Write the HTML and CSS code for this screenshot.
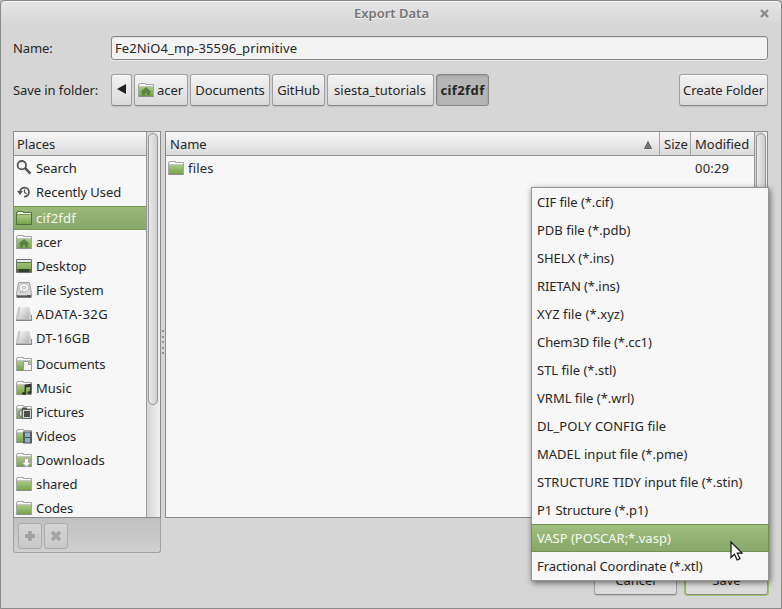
FILE: index.html
```
<!DOCTYPE html>
<html lang="en">
<head>
<meta charset="utf-8">
<title>Export Data</title>
<link rel="stylesheet" href="styles.css">
</head>
<body>
<svg class="defs" width="0" height="0" aria-hidden="true">
  <defs>
    <linearGradient id="green" x1="0" y1="0" x2="0" y2="1"><stop offset="0" stop-color="#a9ca86"/><stop offset="1" stop-color="#76a448"/></linearGradient>
    <linearGradient id="metal" x1="0" y1="0" x2="1" y2="1"><stop offset="0" stop-color="#fafafa"/><stop offset="1" stop-color="#b4b4b4"/></linearGradient>
    <symbol id="folder" viewBox="0 0 16 16">
      <path d="M.5 14.500V2.500h1v-1h6v1h8v12z" fill="#fafafa" stroke="#a5a5a5"/>
      <path d="M1 4.500h14" stroke="#c4c4c4"/>
      <path d="M1 5h14v9H1z" fill="url(#green)"/>
      <path d="M.5 14.500h15" stroke="#8d8d8d"/>
    </symbol>
    <symbol id="home" viewBox="0 0 16 16">
      <use href="#folder"/>
      <path d="M8 5l5.500 5H12v3.500H9V11H7v2.500H4V10H2.500z" fill="#5b8444"/>
    </symbol>
    <symbol id="drive" viewBox="0 0 16 16">
      <path d="M3 1h10l3 11v3H0v-3z" fill="#cfcfcf"/>
      <path d="M4.500 1h7.500l1 11.500H3z" fill="url(#metal)"/>
      <path d="M3 1L.5 12v3" fill="none" stroke="#c2c2c2"/>
      <path d="M0 13h16v1H0z" fill="#b5b5b5"/>
      <path d="M0 14.500h16" stroke="#858585"/>
      <path d="M15.500 9v6" stroke="#909090"/>
    </symbol>
  </defs>
</svg>

<main class="window">
  <header class="titlebar">
    <h1>Export Data</h1>
    <svg class="close" viewBox="0 0 9 9"><path d="M1 1l7 7M8 1L1 8" stroke="#8b8b8b" stroke-width="2.400"/></svg>
  </header>

  <div class="name-row">
    <label class="snug">Name:</label>
    <div class="entry"><span>Fe2NiO4_mp-35596_primitive</span></div>
  </div>

  <div class="path-row">
    <label class="snug">Save in folder:</label>
    <nav class="path">
      <button class="btn back"><svg viewBox="0 0 9 10"><path d="M0 5L9 0v10z" fill="#222"/></svg></button>
      <button class="btn acer"><svg class="icon"><use href="#home"/></svg><span class="snug">acer</span></button>
      <button class="btn docs"><span class="snug">Documents</span></button>
      <button class="btn git"><span class="snug">GitHub</span></button>
      <button class="btn siesta"><span>siesta_tutorials</span></button>
      <button class="btn current"><span>cif2fdf</span></button>
    </nav>
    <button class="btn create"><span class="snug">Create Folder</span></button>
  </div>

  <div class="panes">
    <aside class="sidebar">
      <div class="places">
        <div class="list">
          <div class="head"><span>Places</span></div>
          <ul>
            <li><svg class="icon" viewBox="0 0 16 16"><circle cx="5.800" cy="5.200" r="4.200" fill="none" stroke="#555" stroke-width="1.800"/><path d="M9 8.200l5.500 5.500" stroke="#555" stroke-width="2.400"/></svg><span class="snug">Search</span></li>
            <li><svg class="icon" viewBox="0 0 16 16"><path d="M4 8a4.500 4.500 0 1 1 4 4.500" fill="none" stroke="#555" stroke-width="1.700"/><path d="M1 7h6l-3 4z" fill="#555"/><path d="M8.500 5.500V8.500l2.200 1" fill="none" stroke="#555" stroke-width="1.200"/></svg><span class="snug">Recently Used</span></li>
            <li class="selected gap"><svg class="icon" viewBox="0 0 16 16"><path d="M.5 14.500V2.500h1v-1h6v1h8v12z" fill="#f1f6ea" stroke="#506f38"/><path d="M1 5h14v9H1z" fill="url(#green)"/><path d="M1 4.500h14" stroke="#76964f"/></svg><span class="wide">cif2fdf</span></li>
            <li><svg class="icon"><use href="#home"/></svg><span class="snug">acer</span></li>
            <li><svg class="icon" viewBox="0 0 16 16"><path d="M.5 1.500h15v13H.5z" fill="url(#green)" stroke="#707070"/><path d="M1 2h14v2.500H1z" fill="#eee"/><path d="M1 4.500h14" stroke="#567734"/><path d="M3 11h10v3H3z" fill="#30432a"/><path d="M1 12.500h2M13 12.500h2" stroke="#55673d" stroke-width="3"/></svg><span>Desktop</span></li>
            <li><svg class="icon" viewBox="0 0 16 16"><path d="M2.500.5h11l2 11v4H.5v-4z" fill="#dadada" stroke="#a2a2a2"/><ellipse cx="8" cy="5.800" rx="5" ry="4.300" fill="#f2f2f2" stroke="#b3b3b3"/><ellipse cx="8" cy="5.500" rx="1.700" ry="1.300" fill="#ddd" stroke="#aaa" stroke-width=".7"/><path d="M4 11l3-3" stroke="#aaa"/><path d="M1 13h14v2.500H1z" fill="#555"/><path d="M2 13.500h9" stroke="#888"/></svg><span class="snug">File System</span></li>
            <li><svg class="icon"><use href="#drive"/></svg><span class="drive-name">ADATA-32G</span></li>
            <li><svg class="icon"><use href="#drive"/></svg><span class="wide">DT-16GB</span></li>
            <li class="gap"><svg class="icon" viewBox="0 0 16 16"><use href="#folder"/><path d="M7.500 5.500h5l3 3v6h-8z" fill="#f5f5f5" stroke="#999"/><path d="M12.500 5.500v3h3" fill="#ddd" stroke="#999"/></svg><span class="snug">Documents</span></li>
            <li><svg class="icon" viewBox="0 0 16 16"><use href="#folder"/><path d="M9.300 13V5.500l5.500-1V12M9 7l5.500-1" fill="none" stroke="#353535" stroke-width="1.500"/><ellipse cx="8" cy="13.500" rx="2" ry="1.500" fill="#353535"/><ellipse cx="13.500" cy="12.500" rx="2" ry="1.500" fill="#353535"/></svg><span>Music</span></li>
            <li><svg class="icon" viewBox="0 0 16 16"><use href="#folder"/><path d="M3 8l3-2.500v8L3 11z" fill="#ddd" stroke="#666"/><path d="M6.500 5.500h9v9h-9z" fill="#d5d5d5" stroke="#666"/><path d="M8 7h6v6H8z" fill="#4b5146"/><path d="M6 4.500h5" stroke="#555" stroke-width="2"/></svg><span class="snug">Pictures</span></li>
            <li><svg class="icon" viewBox="0 0 16 16"><use href="#folder"/><path d="M7 3.500h9V15.500H7z" fill="#4c4c4c"/><path d="M9 4.500h5v4.500H9zM9 10h5v4.500H9z" fill="#8bb3cd"/><path d="M8 4v11M15 4v11" stroke="#999" stroke-width=".8" stroke-dasharray="1 1"/></svg><span class="snug">Videos</span></li>
            <li><svg class="icon" viewBox="0 0 16 16"><use href="#folder"/><path d="M8.500 6.500h4v4h2.500L10.500 15 6 10.500h2.500z" fill="#fafafa" stroke="#aaa"/></svg><span class="loose">Downloads</span></li>
            <li><svg class="icon"><use href="#folder"/></svg><span class="snug">shared</span></li>
            <li><svg class="icon"><use href="#folder"/></svg><span class="snug">Codes</span></li>
          </ul>
        </div>
        <div class="scroll"><div class="thumb"></div></div>
      </div>
      <div class="tools">
        <button class="tool"><svg viewBox="0 0 12 12"><path d="M6 1v10M1 6h10" stroke="#a2a2a2" stroke-width="3.800"/></svg></button>
        <button class="tool"><svg viewBox="0 0 12 12"><path d="M2 2l8 8M10 2l-8 8" stroke="#a2a2a2" stroke-width="3.400"/></svg></button>
      </div>
    </aside>
    <div class="grip"><i></i><i></i><i></i><i></i><i></i></div>
    <section class="files">
      <div class="table">
        <div class="columns">
          <div class="head col-name"><span>Name</span><svg viewBox="0 0 8 8"><path d="M4 .5L7.500 7.500h-7z" fill="#777" stroke="#444" stroke-width=".7"/></svg></div>
          <div class="head col-size"><span>Size</span></div>
          <div class="head col-mod"><span>Modified</span></div>
        </div>
        <div class="file"><svg class="icon"><use href="#folder"/></svg><span class="wide">files</span><span class="f-time">00:29</span></div>
      </div>
      <div class="scroll"><div class="thumb"></div></div>
    </section>
  </div>

  <footer class="actions">
    <button class="btn cancel"><span>Cancel</span></button>
    <button class="btn save"><span>Save</span></button>
  </footer>
</main>

<ul class="menu">
  <li><span class="snug">CIF file (*.cif)</span></li>
  <li><span>PDB file (*.pdb)</span></li>
  <li><span class="snug">SHELX (*.ins)</span></li>
  <li><span class="snug">RIETAN (*.ins)</span></li>
  <li><span class="loose">XYZ file (*.xyz)</span></li>
  <li><span class="snug">Chem3D file (*.cc1)</span></li>
  <li><span>STL file (*.stl)</span></li>
  <li><span>VRML file (*.wrl)</span></li>
  <li><span class="loose">DL_POLY CONFIG file</span></li>
  <li><span>MADEL input file (*.pme)</span></li>
  <li><span>STRUCTURE TIDY input file (*.stin)</span></li>
  <li><span class="snug">P1 Structure (*.p1)</span></li>
  <li class="active"><span>VASP (POSCAR;*.vasp)</span></li>
  <li><span class="snug">Fractional Coordinate (*.xtl)</span></li>
</ul>
<svg class="cursor" viewBox="0 0 13 20"><path d="M1 1v15.500l3.500-3.300 2.700 5.800 2.800-1.300-2.700-5.500h4.700z" fill="#fff" stroke="#111" stroke-width="1.200"/></svg>
</body>
</html>
```

FILE: styles.css
```
* { box-sizing: border-box; }
body {
  margin: 0;
  width: 782px;
  height: 609px;
  overflow: hidden;
  background: #b5b5b5;
  color: #262626;
  font: 13px/24px "Noto Sans", "Open Sans", sans-serif;
  white-space: nowrap;
}
ul { list-style: none; margin: 0; padding: 0; }
button { font: inherit; color: inherit; margin: 0; padding: 0; }
.defs { position: absolute; }
.icon { width: 16px; height: 16px; flex: none; display: block; }
.snug { letter-spacing: -.08px; }
.loose { letter-spacing: .08px; }
.wide { letter-spacing: .2px; }
.drive-name { letter-spacing: .45px; }

.window {
  height: 609px;
  border: 1px solid #8a8a8a;
  border-radius: 5px 5px 0 0;
  background: linear-gradient(#e6e6e6, #d6d6d6 24px);
  box-shadow: inset 0 1px #f5f5f5;
  display: flex;
  flex-direction: column;
}
.titlebar { height: 35px; flex: none; display: flex; position: relative; justify-content: center; }
.titlebar h1 { margin: 0; padding-left: 1px; font-size: 13px; font-weight: 600; line-height: 25px; color: #757575; text-shadow: 0 1px #f3f3f3; }
.close { position: absolute; right: 12px; top: 8px; width: 9px; height: 9px; }

.name-row { display: flex; height: 24px; padding: 0 13px 0 12px; }
.name-row label, .path-row label { width: 98px; flex: none; }
.entry {
  flex: 1;
  border: 1px solid #858585;
  border-radius: 3px;
  background: #f3f3f3;
  box-shadow: 0 1px #e8e8e8, inset 0 1px #dedede;
  padding-left: 3px;
  line-height: 23px;
  letter-spacing: .1px;
}
.path-row { display: flex; margin-top: 14px; height: 32px; padding: 0 13px 0 12px; line-height: 32px; }
.path { display: flex; gap: 2px; flex: 1; }
.btn {
  display: flex;
  align-items: center;
  justify-content: center;
  height: 32px;
  line-height: 30px;
  border: 1px solid #a0a0a0;
  border-bottom-color: #8a8a8a;
  border-radius: 3px;
  background: linear-gradient(#f3f3f3, #dadada);
  box-shadow: inset 0 1px #fff, 0 1px 1px #bdbdbd;
}
.back { width: 21px; }
.back svg { width: 9px; height: 10px; margin-top: -2px; }
.acer { width: 54px; gap: 3px; padding-right: 1px; }
.docs { width: 80px; }
.git { width: 53px; }
.siesta { width: 107px; padding-right: 1px; }
.current { width: 53px; font-weight: bold; background: #b5b5b5; border-color: #858585; box-shadow: inset 0 1px 2px #999; }
.current span { letter-spacing: .4px; }
.create { width: 89px; }

.panes { display: flex; margin: 25px 13px 0 12px; height: 422px; flex: none; }
.sidebar { width: 148px; }
.places { display: flex; height: 387px; border: 1px solid #8b8b8b; background: #f7f7f7; overflow: hidden; }
.list { width: 132px; }
.head {
  height: 24px;
  line-height: 24px;
  padding-left: 3px;
  border-bottom: 1px solid #919191;
  background: linear-gradient(#f8f8f8, #dadada);
}
.list li { display: flex; align-items: center; height: 24px; padding-left: 2px; gap: 4px; }
.list li.gap { margin-top: 2px; }
.list .selected { color: #f3f7ee; background: linear-gradient(#9aba7c, #87a668); box-shadow: inset 0 1px #789459, inset 0 -1px #789459; }
.scroll { width: 14px; padding-left: 1px; border-left: 1px solid #999; background: linear-gradient(90deg, #d4d4d4, #f0f0f0); }
.thumb {
  width: 10px;
  height: 272px;
  margin-top: 1px;
  border: 1px solid #969696;
  border-radius: 5px;
  background: linear-gradient(90deg, #e9e9e9, #cecece);
}
.files .scroll { width: 13px; }
.tools {
  display: flex;
  gap: 2px;
  height: 35px;
  padding: 5px 4px;
  border: 1px solid #a0a0a0;
  border-top: 0;
  border-radius: 0 0 3px 3px;
  background: linear-gradient(#c0c0c0, #d0d0d0);
}
.tool {
  width: 24px;
  height: 26px;
  border: 1px solid #acacac;
  border-radius: 3px;
  background: linear-gradient(#d5d5d5, #c9c9c9);
  display: flex;
  align-items: center;
  justify-content: center;
}
.tool svg { width: 12px; height: 12px; }
.grip { width: 4px; display: flex; flex-direction: column; align-items: center; padding-top: 199px; gap: 3.5px; }
.grip i { width: 2px; height: 2px; background: #929292; flex: none; }
.files { flex: 1; display: flex; height: 387px; border: 1px solid #8b8b8b; background: #f7f7f7; }
.table { flex: 1; }
.columns { display: flex; }
.col-name { flex: 1; display: flex; align-items: center; justify-content: space-between; padding-left: 4px; padding-right: 7px; }
.col-name svg { width: 8px; height: 8px; margin-top: 2px; }
.col-size { width: 31px; padding-left: 4px; border-left: 1px solid #a4a4a4; }
.col-mod { width: 64px; border-left: 1px solid #a4a4a4; padding-left: 4px; }
.file { display: flex; align-items: center; height: 24px; padding-left: 2px; gap: 4px; }
.f-time { margin-left: auto; width: 59px; letter-spacing: .2px; }

.actions { display: flex; justify-content: flex-end; gap: 8px; margin-top: 11px; padding-right: 13px; }
.cancel, .save { width: 83px; height: 31px; line-height: 34px; }
.cancel span, .save span { padding-top: 1px; }
.save { box-shadow: 0 0 0 1px #9cc36f; }

.menu {
  position: absolute;
  left: 531px;
  top: 187px;
  width: 238px;
  height: 394px;
  border: 1px solid #969696;
  background: #f7f7f7;
  box-shadow: 1px 2px 6px rgba(0, 0, 0, .55);
}
.menu li { height: 28px; line-height: 28px; padding-left: 5px; }
.menu .active { margin: 0 -1px; padding-left: 6px; color: #f7faf2; background: linear-gradient(#9fc080, #87a669); box-shadow: inset 0 0 0 1px #71934f; }
.cursor { position: absolute; left: 730px; top: 541px; width: 13px; height: 20px; }
```
